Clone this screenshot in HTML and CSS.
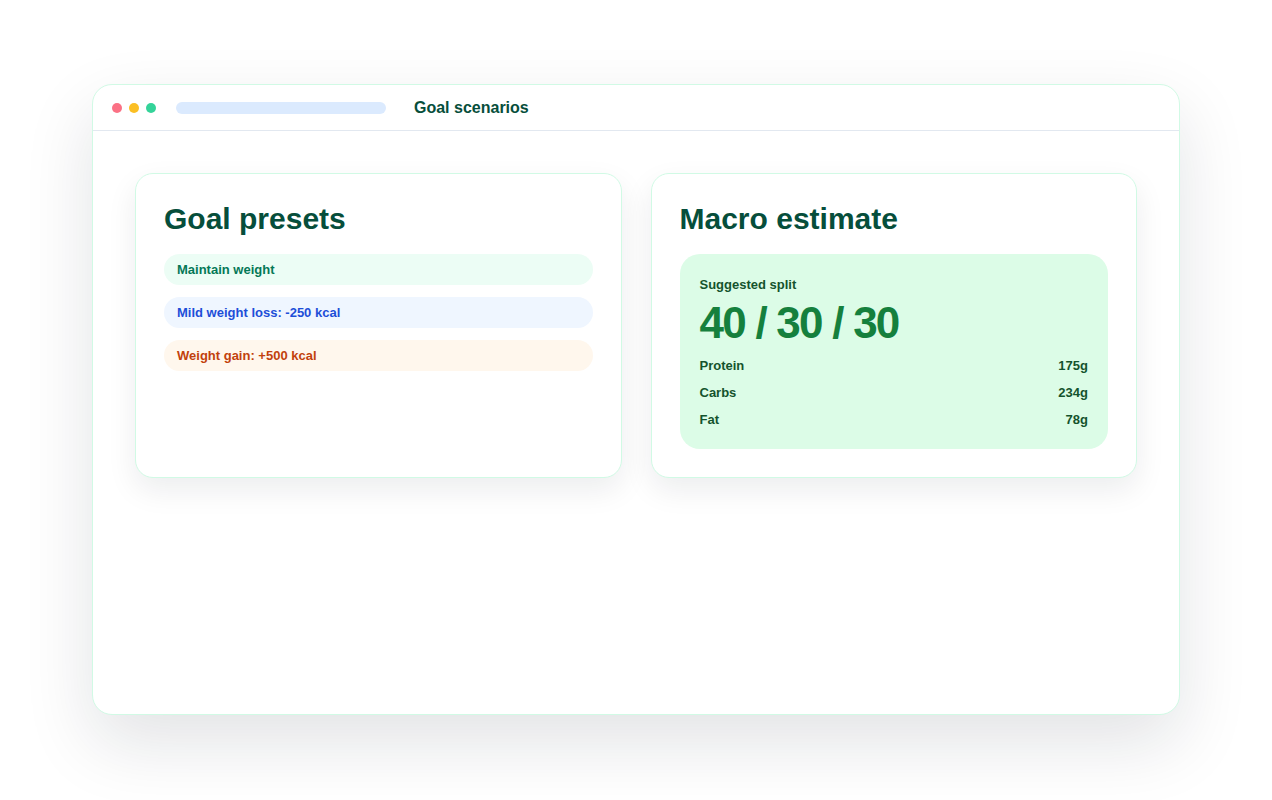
FILE: index.html
```html
<!DOCTYPE html>
<html lang="en">
<head>
    <meta charset="UTF-8">
    <meta name="viewport" content="width=device-width, initial-scale=1.0">
    <title>Goal scenarios</title>
    <link rel="stylesheet" href="styles.css">
</head>
<body>

    <div class="window">
        <!-- Title bar -->
        <div class="titlebar">
            <div class="dots">
                <span class="dot red"></span>
                <span class="dot yellow"></span>
                <span class="dot green"></span>
            </div>
            <div class="address"></div>
            <div class="window-title">Goal scenarios</div>
        </div>

        <div class="content">
            <!-- Goal presets -->
            <div class="card">
                <h2>Goal presets</h2>
                <div class="presets">
                    <div class="pill pill-green">Maintain weight</div>
                    <div class="pill pill-blue">Mild weight loss: -250 kcal</div>
                    <div class="pill pill-orange">Weight gain: +500 kcal</div>
                </div>
            </div>

            <!-- Macro estimate -->
            <div class="card">
                <h2>Macro estimate</h2>
                <div class="split-box">
                    <div class="split-label">Suggested split</div>
                    <div class="split-value">40 / 30 / 30</div>
                    <div class="macro-row"><span>Protein</span><span>175g</span></div>
                    <div class="macro-row"><span>Carbs</span><span>234g</span></div>
                    <div class="macro-row"><span>Fat</span><span>78g</span></div>
                </div>
            </div>
        </div>
    </div>

</body>
</html>
```

FILE: styles.css
```css
body {
    font-family: "Liberation Sans", Arial, sans-serif;
    margin: 0;
    padding: 84px 92px 85px;
    background-color: #ffffff;
    height: 800px;
    box-sizing: border-box;
}

.window {
    height: 100%;
    box-sizing: border-box;
    background-color: #ffffff;
    border: 1px solid #d1fae5;
    border-radius: 20px;
    box-shadow: 0 28px 70px rgba(15, 23, 42, 0.12);
    overflow: hidden;
}

.titlebar {
    display: flex;
    align-items: center;
    height: 45px;
    padding: 0 19px;
    border-bottom: 1px solid #e2e8f0;
}

.dots {
    display: flex;
    gap: 7px;
}

.dot {
    width: 10px;
    height: 10px;
    border-radius: 50%;
}

.dot.red {
    background-color: #fb7185;
}

.dot.yellow {
    background-color: #fbbf24;
}

.dot.green {
    background-color: #34d399;
}

.address {
    width: 210px;
    height: 12px;
    margin-left: 20px;
    border-radius: 6px;
    background-color: #dbeafe;
}

.window-title {
    margin-left: 28px;
    font-size: 16px;
    font-weight: bold;
    color: #064e3b;
}

.content {
    display: grid;
    grid-template-columns: 1fr 1fr;
    gap: 29px;
    padding: 42px 42px;
}

.card {
    background-color: #ffffff;
    border: 1px solid #d1fae5;
    border-radius: 18px;
    padding: 28px;
    box-shadow: 0 12px 30px rgba(15, 23, 42, 0.08);
}

.card h2 {
    margin: 0 0 18px;
    font-size: 30px;
    line-height: 34px;
    color: #064e3b;
}

.presets {
    display: flex;
    flex-direction: column;
    gap: 12px;
}

.pill {
    height: 31px;
    line-height: 31px;
    padding: 0 13px;
    border-radius: 16px;
    font-size: 13px;
    font-weight: bold;
}

.pill-green {
    background-color: #ecfdf5;
    color: #047857;
}

.pill-blue {
    background-color: #eff6ff;
    color: #1d4ed8;
}

.pill-orange {
    background-color: #fff7ed;
    color: #c2410c;
}

.split-box {
    background-color: #dcfce7;
    border-radius: 20px;
    padding: 22px 20px 21px;
    color: #14532d;
}

.split-label {
    font-size: 13px;
    line-height: 18px;
    font-weight: bold;
}

.split-value {
    margin: 5px 0 10px;
    font-size: 44px;
    line-height: 48px;
    font-weight: bold;
    letter-spacing: -0.04em;
    color: #15803d;
}

.macro-row {
    display: flex;
    justify-content: space-between;
    font-size: 13px;
    line-height: 17px;
    font-weight: bold;
}

.macro-row + .macro-row {
    margin-top: 10px;
}
```
